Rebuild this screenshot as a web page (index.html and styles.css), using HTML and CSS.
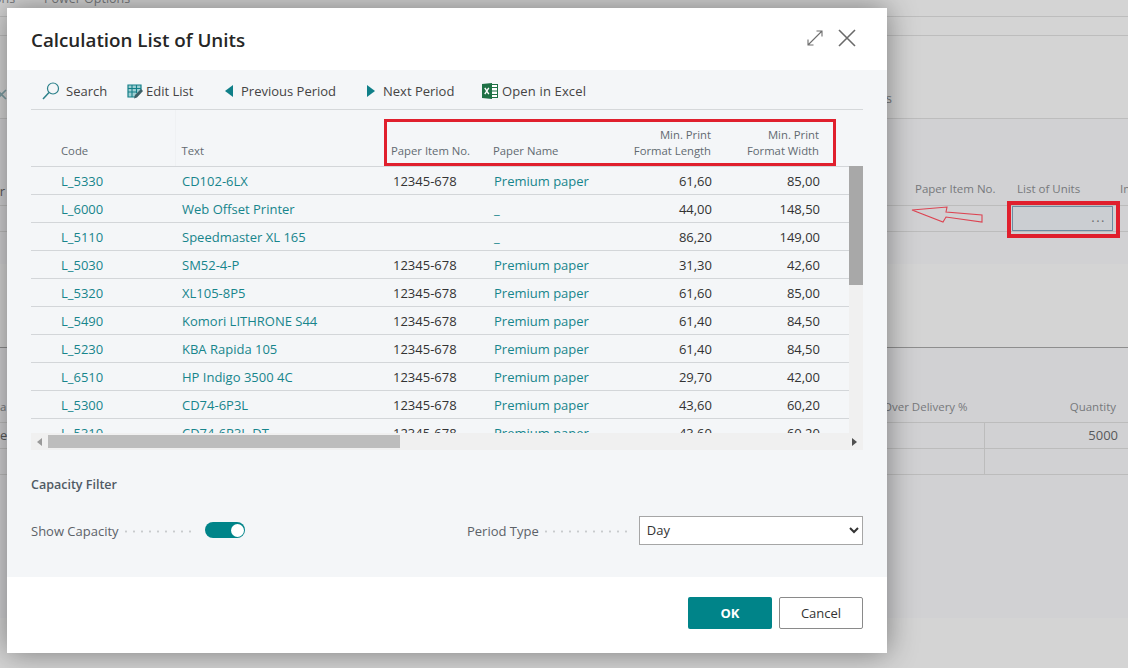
FILE: index.html
```html
<!DOCTYPE html>
<html lang="en">
<head>
  <meta charset="UTF-8">
  <meta name="viewport" content="width=device-width, initial-scale=1.0">
  <title>Calculation List of Units</title>
  <link rel="stylesheet" href="styles.css">
</head>
<body>
<div class="page">

  <!-- dimmed page behind the dialog -->
  <div class="backdrop">
    <div class="bg-tabs">
      <span class="bg-tab-a">ons</span>
      <span class="bg-tab-b">Power Options</span>
    </div>
    <div class="bg-strip"></div>
    <div class="bg-actions">
      <svg class="bg-x" width="8" height="12" viewBox="0 0 8 12"><path d="M-3 1 L6 10 M6 1 L-3 10" stroke="#7c9da3" stroke-width="1.6" fill="none"/></svg>
      <span class="bg-s">s</span>
    </div>
    <div class="bg-panel-top">
      <div class="bg-labels bg-labels-top">
        <span></span>
        <span class="bg-label">Paper Item No.</span>
        <span class="bg-label">List of Units</span>
        <span class="bg-label">In</span>
      </div>
      <div class="bg-row bg-row-top">
        <span class="bg-val bg-cell-line">or</span>
        <span></span>
        <div class="units-input"><span>...</span></div>
        <span></span>
      </div>
    </div>
    <div class="bg-gap"></div>
    <div class="bg-panel-bottom">
      <div class="bg-labels bg-labels-bottom">
        <span class="bg-label">a</span>
        <span class="bg-label bg-over">Over Delivery %</span>
        <span class="bg-label bg-right">Quantity</span>
      </div>
      <div class="bg-row bg-row-bottom">
        <span class="bg-val">ed</span>
        <span></span>
        <span class="bg-val bg-right bg-cell-line">5000</span>
      </div>
      <div class="bg-row bg-row-bottom">
        <span></span>
        <span></span>
        <span class="bg-cell-line"></span>
      </div>
    </div>
  </div>

  <!-- dialog -->
  <div class="dialog">
    <header class="dialog-head">
      <h1>Calculation List of Units</h1>
      <div class="head-icons">
        <svg width="16" height="16" viewBox="0 0 16 16" fill="none" stroke="#6e6e6e" stroke-width="1.1"><path d="M1 15 L15 1 M9.5 1 H15 V6.5 M1 9.5 V15 H6.5"/></svg>
        <svg width="18" height="18" viewBox="0 0 18 18" fill="none" stroke="#6a6a6a" stroke-width="1.6"><path d="M1 1 L17 17 M17 1 L1 17"/></svg>
      </div>
    </header>

    <div class="dialog-body">
      <div class="toolbar">
        <span class="tool tool-search">
          <svg width="18" height="18" viewBox="0 0 18 18" fill="none" stroke="#2b808a" stroke-width="1.2"><circle cx="11" cy="6.5" r="5.5"/><path d="M7 10.5 L1 17" stroke-width="1.5"/></svg>
          Search
        </span>
        <span class="tool tool-edit">
          <svg width="16" height="15" viewBox="0 0 16 15"><path d="M1 1 H14 V7 L8 13 H1 Z" fill="#9fcfd3" stroke="#137f88" stroke-width="1.2"/><path d="M1 4.5 H14 M1 8 H10 M5 1 V13 M9.5 1 V9" stroke="#137f88" stroke-width="1.1" fill="none"/><path d="M7 14.5 L8 11 L14 5 L16 7 L10 13.5 Z" fill="#3d5f66"/></svg>
          Edit List
        </span>
        <span class="tool tool-prev"><i class="tri tri-left"></i>Previous Period</span>
        <span class="tool tool-next"><i class="tri tri-right"></i>Next Period</span>
        <span class="tool tool-excel">
          <svg width="16" height="16" viewBox="0 0 16 16"><rect x="7" y="1.5" width="8.5" height="13" fill="#fff" stroke="#1e7145"/><path d="M8 4.5 H15 M8 8 H15 M8 11.5 H15" stroke="#1e7145" stroke-width="1.2"/><path d="M0 1 L10 0 V16 L0 15 Z" fill="#1e7145"/><path d="M2.8 4.8 L6.8 11.2 M6.8 4.8 L2.8 11.2" stroke="#fff" stroke-width="1.4"/></svg>
          Open in Excel
        </span>
      </div>

      <div class="list">
        <div class="list-main">
          <div class="list-clip">
            <table class="units">
              <colgroup>
                <col class="c-code"><col class="c-text"><col class="c-item"><col class="c-name"><col class="c-len"><col class="c-wid"><col>
              </colgroup>
              <thead>
                <tr>
                  <th class="first">Code</th>
                  <th>Text</th>
                  <th class="th-item">Paper Item No.</th>
                  <th class="th-name">Paper Name</th>
                  <th class="num">Min. Print<br>Format Length</th>
                  <th class="num">Min. Print<br>Format Width</th>
                  <th></th>
                </tr>
              </thead>
              <tbody>
                <tr><td class="first link">L_5330</td><td class="link">CD102-6LX</td><td>12345-678</td><td class="link">Premium paper</td><td class="num">61,60</td><td class="num">85,00</td><td></td></tr>
                <tr><td class="first link">L_6000</td><td class="link">Web Offset Printer</td><td></td><td class="link">_</td><td class="num">44,00</td><td class="num">148,50</td><td></td></tr>
                <tr><td class="first link">L_5110</td><td class="link">Speedmaster XL 165</td><td></td><td class="link">_</td><td class="num">86,20</td><td class="num">149,00</td><td></td></tr>
                <tr><td class="first link">L_5030</td><td class="link">SM52-4-P</td><td>12345-678</td><td class="link">Premium paper</td><td class="num">31,30</td><td class="num">42,60</td><td></td></tr>
                <tr><td class="first link">L_5320</td><td class="link">XL105-8P5</td><td>12345-678</td><td class="link">Premium paper</td><td class="num">61,60</td><td class="num">85,00</td><td></td></tr>
                <tr><td class="first link">L_5490</td><td class="link">Komori LITHRONE S44</td><td>12345-678</td><td class="link">Premium paper</td><td class="num">61,40</td><td class="num">84,50</td><td></td></tr>
                <tr><td class="first link">L_5230</td><td class="link">KBA Rapida 105</td><td>12345-678</td><td class="link">Premium paper</td><td class="num">61,40</td><td class="num">84,50</td><td></td></tr>
                <tr><td class="first link">L_6510</td><td class="link">HP Indigo 3500 4C</td><td>12345-678</td><td class="link">Premium paper</td><td class="num">29,70</td><td class="num">42,00</td><td></td></tr>
                <tr><td class="first link">L_5300</td><td class="link">CD74-6P3L</td><td>12345-678</td><td class="link">Premium paper</td><td class="num">43,60</td><td class="num">60,20</td><td></td></tr>
                <tr><td class="first link">L_5310</td><td class="link">CD74-6P3L-DT</td><td>12345-678</td><td class="link">Premium paper</td><td class="num">43,60</td><td class="num">60,20</td><td></td></tr>
              </tbody>
            </table>
          </div>
          <div class="vscroll"><div class="vthumb"></div></div>
        </div>
        <div class="hscroll">
          <i class="mini mini-left"></i>
          <div class="htrack"><div class="hthumb"></div></div>
          <i class="mini mini-right"></i>
        </div>
      </div>

      <h2 class="group-title">Capacity Filter</h2>
      <div class="fields">
        <div class="field field-show">
          <span class="field-label">Show Capacity</span>
          <span class="leader"></span>
          <span class="toggle"><span class="knob"></span></span>
        </div>
        <div class="field field-period">
          <span class="field-label">Period Type</span>
          <span class="leader"></span>
          <select class="period"><option>Day</option><option>Week</option><option>Month</option></select>
        </div>
      </div>
    </div>

    <footer class="dialog-foot">
      <button class="btn btn-ok">OK</button>
      <button class="btn btn-cancel">Cancel</button>
    </footer>

    <div class="red-box red-box-head"></div>
  </div>

  <!-- annotations on the screenshot -->
  <div class="red-box red-box-units"></div>
  <svg class="red-arrow" width="74" height="20" viewBox="0 0 74 20"><path d="M1 5 L36 2 L35 7 L71 10 L71 17 L35 12 L32 17 Z" fill="none" stroke="#dc4452" stroke-width="1.1"/></svg>
</div>
</body>
</html>
```

FILE: styles.css
```css
* {
  box-sizing: border-box;
}

html, body {
  margin: 0;
  padding: 0;
}

body {
  font-family: "Open Sans", "Noto Sans", sans-serif;
  font-size: 13px;
  color: #333;
  background: #d4d4d4;
}

.page {
  position: relative;
  width: 1128px;
  height: 668px;
  overflow: hidden;
}

/* backdrop */
.backdrop {
  width: 1128px;
  height: 668px;
  background: #d4d4d4;
  color: #77797c;
}

.bg-tabs {
  height: 17px;
  border-bottom: 1px solid #bdbdbd;
  display: flex;
  line-height: 16px;
  font-size: 12.5px;
  overflow: hidden;
}

.bg-tab-a {
  margin-top: -9px;
  margin-left: -6px;
  width: 50px;
  height: 16px;
}

.bg-tab-b {
  margin-top: -9px;
  height: 16px;
}

.bg-strip {
  height: 19px;
  border-bottom: 1px solid #bdbdbd;
}

.bg-actions {
  height: 83px;
  border-bottom: 1px solid #bdbdbd;
  display: flex;
  align-items: flex-start;
  justify-content: space-between;
  padding-top: 54px;
}

.bg-x {
  margin-top: -1px;
}

.bg-s {
  margin-right: 236px;
  line-height: 16px;
}

.bg-panel-top {
  height: 145px;
  background: #d1d1d3;
}

.bg-labels {
  display: grid;
  align-items: end;
  font-size: 11.5px;
}

.bg-labels-top {
  height: 87px;
  grid-template-columns: 915px 102px 103px 8px;
  padding-bottom: 8px;
  border-bottom: 1px solid #bcbcbc;
}

.bg-row {
  display: grid;
  height: 26px;
  border-bottom: 1px solid #bcbcbc;
}

.bg-row-top {
  grid-template-columns: 909px 103px 101px 15px;
}

.bg-label {
  white-space: nowrap;
  line-height: 16px;
}

.bg-val {
  color: #58595b;
  line-height: 25px;
  font-size: 13px;
}

.bg-cell-line {
  border-right: 1px solid #bcbcbc;
}

.bg-row-top .bg-val {
  margin-top: -27px;
  border-right: 0;
  text-indent: -8px;
}

.units-input {
  height: 25px;
  border: 1px solid #6c8ba0;
  background: #cbced2;
  text-align: right;
  padding-right: 6px;
  line-height: 21px;
  color: #6b6d70;
  font-size: 13px;
  letter-spacing: 1.5px;
}

.bg-gap {
  height: 84px;
  border-bottom: 1px solid #8e8e8e;
}

.bg-panel-bottom {
  height: 270px;
  background: #d1d1d3;
}

.bg-labels-bottom {
  height: 75px;
  grid-template-columns: 883px 101px 132px;
  padding-bottom: 7px;
  border-bottom: 1px solid #bcbcbc;
}

.bg-row-bottom {
  grid-template-columns: 883px 101px 144px;
}

.bg-right {
  text-align: right;
}

.bg-row-bottom .bg-right {
  padding-right: 10px;
  border-right: 0;
  border-left: 1px solid #bcbcbc;
}

.bg-row-bottom .bg-cell-line {
  border-right: 0;
  border-left: 1px solid #bcbcbc;
}

/* dialog */
.dialog {
  position: absolute;
  left: 7px;
  top: 8px;
  width: 880px;
  height: 645px;
  display: flex;
  flex-direction: column;
  background: #fff;
  box-shadow: 0 0 28px rgba(0, 0, 0, 0.42);
}

.dialog-head {
  height: 62px;
  flex: none;
  display: flex;
  align-items: center;
  justify-content: space-between;
  padding: 0 31px 0 24px;
}

.dialog-head h1 {
  margin: 1px 0 0;
  font-size: 18.8px;
  font-weight: 600;
  color: #262626;
}

.head-icons {
  display: flex;
  align-items: center;
  gap: 15px;
  margin-top: -2px;
}

.dialog-body {
  height: 507px;
  flex: none;
  background: #f4f6f8;
  padding: 0 24px;
}

.toolbar {
  height: 40px;
  display: flex;
  align-items: center;
  border-bottom: 1px solid #d5d8da;
  font-size: 13px;
  color: #444;
  padding-left: 11px;
  padding-top: 3px;
}

.tool {
  display: flex;
  align-items: center;
  white-space: nowrap;
}

.tool-search { width: 85px; gap: 6px; }
.tool-edit { width: 98px; gap: 3px; }
.tool-prev { width: 142px; }
.tool-next { width: 115px; }
.tool-excel { gap: 4px; letter-spacing: 0.15px; }

.tri {
  display: block;
  width: 0;
  height: 0;
  margin-right: 8px;
  border-top: 6px solid transparent;
  border-bottom: 6px solid transparent;
}

.tri-left { border-right: 8px solid #0f7f88; }
.tri-right { border-left: 8px solid #0f7f88; }

/* list */
.list {
  width: 832px;
}

.list-main {
  display: flex;
  height: 323px;
}

.list-clip {
  width: 818px;
  height: 323px;
  overflow: hidden;
}

.units {
  width: 818px;
  table-layout: fixed;
  border-collapse: collapse;
  font-size: 13px;
}

.c-code { width: 144px; }
.c-text { width: 211px; }
.c-item { width: 101px; }
.c-name { width: 133px; }
.c-len { width: 100px; }
.c-wid { width: 108px; }

.units th {
  height: 56px;
  padding: 0 8px 7px 6px;
  vertical-align: bottom;
  text-align: left;
  font-size: 11.3px;
  font-weight: 400;
  line-height: 16px;
  color: #626a71;
  border-bottom: 1px solid #d3d6d9;
  white-space: nowrap;
}

.units th.first {
  border-right: 1px solid #eff1f3;
}

.units td {
  height: 28px;
  padding: 2px 8px 0 7px;
  border-bottom: 1px solid #d3d6d9;
  white-space: nowrap;
}

.units .first {
  padding-left: 30px;
}

.units td.first {
  padding-left: 30px;
}

.units th.th-item {
  padding-left: 5px;
}

.units th.th-name {
  padding-left: 6px;
}

.units .num {
  text-align: right;
}

.units th.num {
  padding-right: 9px;
}

.units .link {
  color: #17858c;
}

.vscroll {
  width: 14px;
  height: 267px;
  margin-top: 56px;
  background: #f0f0f0;
}

.vthumb {
  height: 119px;
  background: #a8a8a8;
}

.hscroll {
  height: 17px;
  display: flex;
  align-items: center;
  background: #f0f0f0;
}

.htrack {
  flex: 1;
  height: 13px;
}

.hthumb {
  width: 352px;
  height: 13px;
  background: #bdbdbd;
}

.mini {
  display: block;
  width: 17px;
  height: 0;
  border-top: 4px solid transparent;
  border-bottom: 4px solid transparent;
}

.mini-left {
  border-right: 5px solid #9a9a9a;
  border-left: 5px solid transparent;
  width: 0;
  margin: 0 6px 0 1px;
}

.mini-right {
  border-left: 5px solid #505050;
  width: 0;
  margin: 0 6px 0 3px;
}

/* capacity filter */
.group-title {
  margin: 26px 0 0;
  font-size: 12.5px;
  line-height: 18px;
  font-weight: 600;
  color: #505a64;
}

.fields {
  display: flex;
  width: 832px;
  margin-top: 20px;
  height: 32px;
  align-items: center;
}

.field {
  display: flex;
  align-items: center;
}

.field-show {
  width: 436px;
}

.field-period {
  width: 396px;
}

.field-label {
  margin-top: 1px;
  color: #5c6268;
  white-space: nowrap;
}

.leader {
  height: 3px;
  margin: 3px 8px 0 6px;
  background-image: radial-gradient(circle at 1px 1.5px, #c8cbcd 1px, transparent 1.2px);
  background-size: 8px 3px;
  background-repeat: repeat-x;
}

.field-show .leader {
  width: 70px;
  margin-right: 10px;
}

.field-period .leader {
  width: 86px;
}

.toggle {
  display: flex;
  align-items: center;
  justify-content: flex-end;
  width: 40px;
  height: 16px;
  padding-right: 1px;
  border-radius: 8px;
  background: #008489;
}

.knob {
  width: 13px;
  height: 13px;
  border-radius: 50%;
  background: #fff;
}

.period {
  width: 224px;
  height: 29px;
  padding-left: 3px;
  font-family: "Open Sans", "Noto Sans", sans-serif;
  font-size: 13px;
  color: #333;
  background: #fff;
  border: 1px solid #a6a6a6;
  border-radius: 0;
}

/* footer */
.dialog-foot {
  flex: 1;
  display: flex;
  justify-content: flex-end;
  align-items: flex-start;
  gap: 7px;
  padding: 20px 24px 0 0;
}

.btn {
  width: 84px;
  height: 32px;
  padding: 0;
  font-family: "Open Sans", "Noto Sans", sans-serif;
  font-size: 13px;
  border-radius: 2px;
}

.btn-ok {
  font-weight: 700;
  color: #fff;
  background: #008489;
  border: none;
}

.btn-cancel {
  color: #333;
  background: #fff;
  border: 1px solid #8a8a8a;
}

/* red annotations */
.red-box {
  position: absolute;
  border: 3px solid #e01f2d;
}

.red-box-head {
  left: 377px;
  top: 111px;
  width: 452px;
  height: 47px;
}

.red-box-units {
  left: 1007px;
  top: 201px;
  width: 113px;
  height: 37px;
  border-width: 4px;
}

.red-arrow {
  position: absolute;
  left: 911px;
  top: 205px;
}
```
